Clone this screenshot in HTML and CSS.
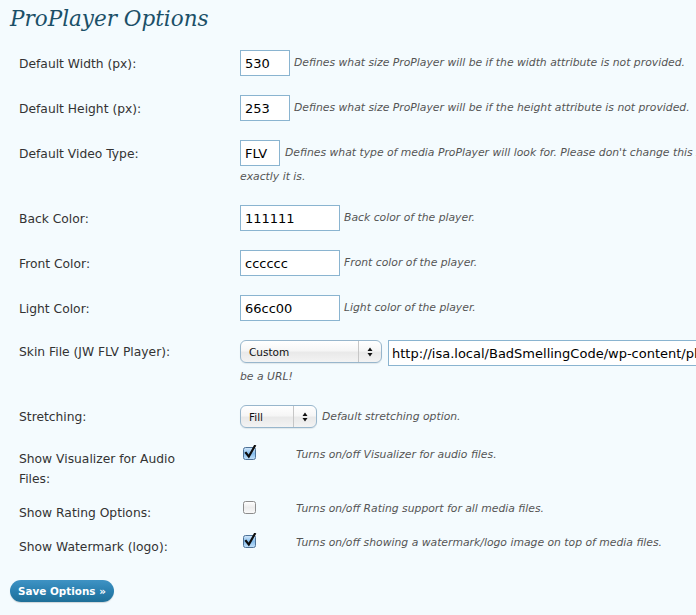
FILE: index.html
```html
<!DOCTYPE html>
<html>
<head>
<meta charset="utf-8">
<title>ProPlayer Options</title>
<link rel="stylesheet" href="styles.css">
</head>
<body>
<div class="wrap">
  <h2 class="title">ProPlayer Options</h2>
  <form class="options">
    <div class="row row-input">
      <div class="label">Default Width (px):</div>
      <div class="field"><input class="text w50" type="text" value="530"><span class="desc">Defines what size ProPlayer will be if the width attribute is not provided.</span></div>
    </div>
    <div class="row row-input">
      <div class="label">Default Height (px):</div>
      <div class="field"><input class="text w50" type="text" value="253"><span class="desc">Defines what size ProPlayer will be if the height attribute is not provided.</span></div>
    </div>
    <div class="row row-input row-wrap">
      <div class="label">Default Video Type:</div>
      <div class="field"><input class="text w40" type="text" value="FLV"><span class="desc gap5">Defines what type of media ProPlayer will look for. Please don't change this setting unless you know what<br>exactly it is.</span></div>
    </div>
    <div class="row row-input">
      <div class="label">Back Color:</div>
      <div class="field"><input class="text w100" type="text" value="111111"><span class="desc">Back color of the player.</span></div>
    </div>
    <div class="row row-input">
      <div class="label">Front Color:</div>
      <div class="field"><input class="text w100" type="text" value="cccccc"><span class="desc">Front color of the player.</span></div>
    </div>
    <div class="row row-input">
      <div class="label">Light Color:</div>
      <div class="field"><input class="text w100" type="text" value="66cc00"><span class="desc">Light color of the player.</span></div>
    </div>
    <div class="row row-select row-wrap">
      <div class="label">Skin File (JW FLV Player):</div>
      <div class="field field-top"><span class="select w142"><span class="sel-text">Custom</span><span class="sel-arrows"><svg width="6" height="10" viewBox="0 0 6 10"><path d="M0.5 4 L3 0.5 L5.5 4 Z M0.5 6 L5.5 6 L3 9.5 Z" fill="#111"/></svg></span></span><input class="text url" type="text" value="http://isa.local/BadSmellingCode/wp-content/plugins/proplayer/skins/custom.swf"><span class="desc">The custom skin file must<br>be a URL!</span></div>
    </div>
    <div class="row row-select">
      <div class="label">Stretching:</div>
      <div class="field"><span class="select w77"><span class="sel-text">Fill</span><span class="sel-arrows"><svg width="6" height="10" viewBox="0 0 6 10"><path d="M0.5 4 L3 0.5 L5.5 4 Z M0.5 6 L5.5 6 L3 9.5 Z" fill="#111"/></svg></span></span><span class="desc gap5">Default stretching option.</span></div>
    </div>
    <div class="row row-check">
      <div class="label">Show Visualizer for Audio Files:</div>
      <div class="field field-check"><span class="checkbox"><svg width="14" height="15" viewBox="0 0 14 15"><defs><linearGradient id="cb1" x1="0" y1="0" x2="0" y2="1"><stop offset="0" stop-color="#d5e9fb"/><stop offset="0.5" stop-color="#86bdec"/><stop offset="1" stop-color="#c4e2fb"/></linearGradient></defs><rect x="0.5" y="2.5" width="12" height="12" rx="2" fill="url(#cb1)" stroke="#4d7196"/><path d="M3 8 L5.8 11.6 L11.8 1" fill="none" stroke="#0d0d0d" stroke-width="2.2" stroke-linecap="square"/></svg></span><span class="desc">Turns on/off Visualizer for audio files.</span></div>
    </div>
    <div class="row row-check">
      <div class="label">Show Rating Options:</div>
      <div class="field field-check"><span class="checkbox"><svg width="14" height="15" viewBox="0 0 14 15"><defs><linearGradient id="cb2" x1="0" y1="0" x2="0" y2="1"><stop offset="0" stop-color="#ffffff"/><stop offset="0.5" stop-color="#ececec"/><stop offset="1" stop-color="#fafafa"/></linearGradient></defs><rect x="0.5" y="2.5" width="12" height="12" rx="2" fill="url(#cb2)" stroke="#8c8c8c"/></svg></span><span class="desc">Turns on/off Rating support for all media files.</span></div>
    </div>
    <div class="row row-check">
      <div class="label">Show Watermark (logo):</div>
      <div class="field field-check"><span class="checkbox"><svg width="14" height="15" viewBox="0 0 14 15"><defs><linearGradient id="cb3" x1="0" y1="0" x2="0" y2="1"><stop offset="0" stop-color="#d5e9fb"/><stop offset="0.5" stop-color="#86bdec"/><stop offset="1" stop-color="#c4e2fb"/></linearGradient></defs><rect x="0.5" y="2.5" width="12" height="12" rx="2" fill="url(#cb3)" stroke="#4d7196"/><path d="M3 8 L5.8 11.6 L11.8 1" fill="none" stroke="#0d0d0d" stroke-width="2.2" stroke-linecap="square"/></svg></span><span class="desc">Turns on/off showing a watermark/logo image on top of media files.</span></div>
    </div>
    <div class="submit"><button type="button" class="button">Save Options »</button></div>
  </form>
</div>
</body>
</html>
```

FILE: styles.css
```css
html, body {
  margin: 0;
  padding: 0;
  overflow: hidden;
  background: #f4fbfe;
}
body {
  font-family: "DejaVu Sans", Verdana, sans-serif;
  color: #333;
}
.wrap {
  width: 696px;
  height: 615px;
  overflow: hidden;
  padding-left: 10px;
  box-sizing: border-box;
}
.title {
  margin: 0 0 2px 0;
  font-family: "DejaVu Serif", Georgia, serif;
  font-style: italic;
  font-weight: normal;
  font-size: 21.5px;
  line-height: 38px;
  color: #1b5068;
  white-space: nowrap;
}
.options {
  margin: 0;
}
.row {
  display: grid;
  grid-template-columns: 221px 760px;
  padding: 10px 0 9px 9px;
}
.row-wrap {
  padding-bottom: 7px;
}
.label {
  font-size: 12.3px;
  line-height: 20px;
  color: #333;
  padding-right: 34px;
}
.row-input .label { margin-top: 4px; }
.row-select .label { margin-top: 2px; }
.row-check { padding-bottom: 2px; }
.row-check .label { margin-top: 2px; }
.field {
  font-size: 10.8px;
  line-height: 22px;
  white-space: nowrap;
}
.field-top .select,
.field-top .text {
  vertical-align: top;
}
.field-check {
  line-height: 15px;
}
.desc {
  font-style: italic;
  color: #555;
  margin-left: 4px;
}
.desc.gap5 { margin-left: 5px; }
.text {
  box-sizing: border-box;
  height: 26px;
  margin: 0;
  padding: 0 4px;
  border: 1px solid #8ab4d0;
  border-radius: 0;
  background: #fff;
  font-family: "DejaVu Sans", Verdana, sans-serif;
  font-size: 13px;
  color: #000;
  vertical-align: middle;
  outline: none;
}
.w50 { width: 50px; }
.w40 { width: 40px; }
.w100 { width: 100px; }
.url {
  width: 360px;
  margin-left: 6px;
  padding-left: 3px;
}
.select {
  display: inline-flex;
  align-items: stretch;
  box-sizing: border-box;
  height: 23px;
  border: 1px solid #98b6cc;
  border-radius: 6px;
  background: linear-gradient(#ffffff 0%, #f6f6f6 45%, #e9e9e9 55%, #f3f3f3 100%);
  vertical-align: middle;
  font-size: 10.5px;
  color: #111;
  box-shadow: 0 1px 1px rgba(0, 0, 0, 0.08);
}
.w142 { width: 142px; }
.w77 { width: 77px; }
.sel-text {
  flex: 1;
  display: flex;
  align-items: center;
  padding-left: 8px;
}
.sel-arrows {
  width: 22px;
  border-left: 1px solid #c6c6c6;
  display: flex;
  align-items: center;
  justify-content: center;
}
.checkbox {
  display: inline-block;
  width: 14px;
  height: 15px;
  margin: -2px 35px 0 3px;
  vertical-align: top;
}
.checkbox svg { display: block; }
.submit {
  padding-top: 21px;
}
.button {
  display: inline-block;
  box-sizing: border-box;
  width: 104px;
  height: 22px;
  padding: 0;
  border: none;
  border-radius: 11px;
  background: linear-gradient(#3f93c4 0%, #2a80b0 50%, #1f6f98 100%);
  box-shadow: 0 1px 1px rgba(0, 0, 0, 0.15);
  color: #fff;
  font-family: "DejaVu Sans", Verdana, sans-serif;
  font-weight: bold;
  font-size: 10.4px;
  line-height: 22px;
  text-align: center;
  cursor: pointer;
}
```
